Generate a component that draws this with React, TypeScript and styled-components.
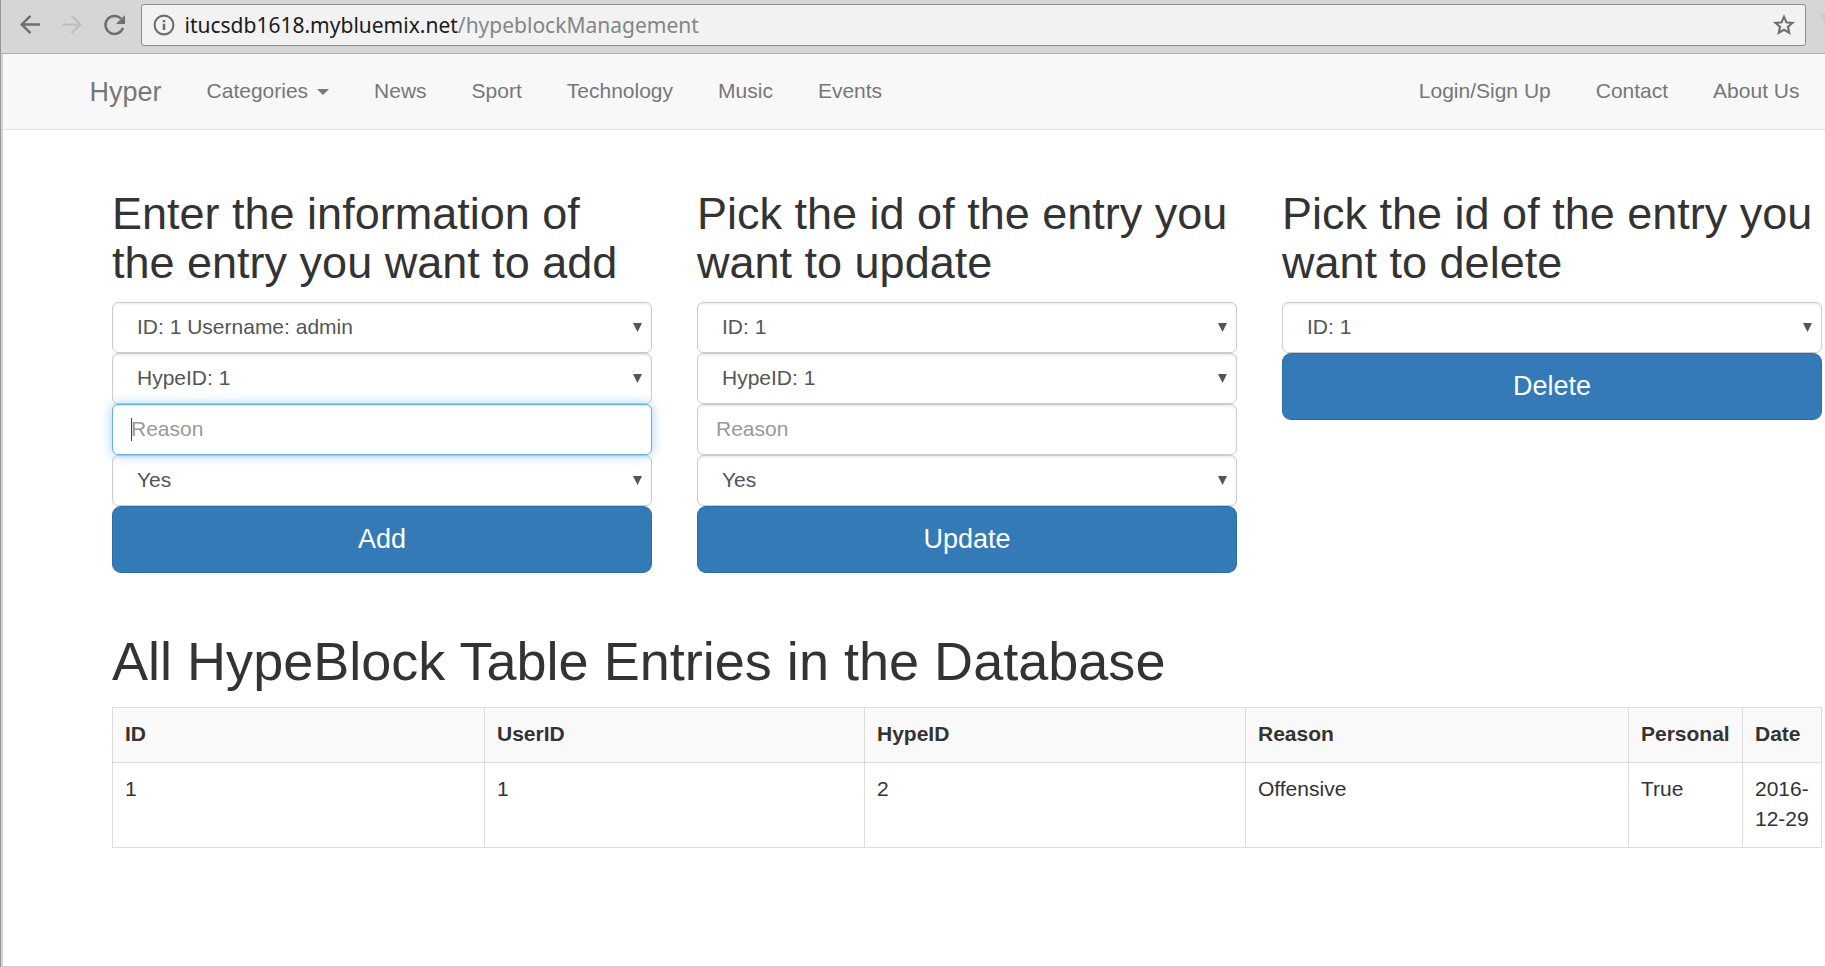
import React from "react";
import styled, { createGlobalStyle, css } from "styled-components";

const GlobalStyle = createGlobalStyle`
  * { box-sizing: border-box; }
  body {
    margin: 0;
    background: #fff;
    color: #333;
    font: 21px/30px "Liberation Sans", Arial, sans-serif;
    overflow: hidden;
  }
`;

const Window = styled.div`
  display: flex;
  flex-direction: column;
  width: 1825px;
  height: 967px;
  border-left: 1px solid #979797;
  overflow: hidden;
`;

const Toolbar = styled.header`
  display: flex;
  align-items: flex-start;
  flex: none;
  height: 54px;
  padding: 4px 0 0 16px;
  background: #d6d6d6;
  border-bottom: 1px solid #b0b0b0;
`;

const ToolIcon = styled.svg<{ $faded?: boolean }>`
  flex: none;
  width: 28px;
  height: 28px;
  margin: 7px 14px 0 0;
  color: ${(p) => (p.$faded ? "#bdbdbd" : "#6e6e6e")};
`;

const ExtensionIcon = styled.svg`
  flex: none;
  width: 12px;
  height: 14px;
  margin: 9px 0 0 16px;
  color: #c6c6c6;
`;

const AddressBar = styled.div`
  display: flex;
  flex: none;
  align-items: center;
  width: 1665px;
  height: 42px;
  margin-left: -2px;
  padding: 0 9.5px 0 10px;
  background: #f2f2f2;
  border: 1px solid #8c8c8c;
  border-radius: 3px;
`;

const BarIcon = styled.svg`
  flex: none;
  width: 24px;
  height: 24px;
  color: #6e6e6e;
`;

const Url = styled.div`
  flex: 1;
  margin-left: 8.5px;
  font: 21px/38px "Noto Sans", sans-serif;
  color: #1b1b1b;
  span { color: #858585; }
`;

const Page = styled.div`
  flex: 1;
  display: flex;
  flex-direction: column;
  border-left: 2px solid #d3d3d3;
  border-bottom: 1px solid #d0d0d0;
  background: #fff;
`;

const Navbar = styled.nav`
  display: flex;
  flex: none;
  height: 76px;
  padding: 0 25.5px 0 86.5px;
  background: #f8f8f8;
  border-bottom: 1px solid #e3e3e3;
  color: #777;
  line-height: 73px;
`;

const Brand = styled.div`
  font-size: 27px;
  line-height: 76px;
  margin-right: 45px;
`;

const NavGroup = styled.div<{ $end?: boolean }>`
  display: flex;
  align-items: flex-start;
  gap: 45px;
  ${(p) => p.$end && css`margin-left: auto;`}
`;

const NavItem = styled.div`
  display: flex;
  align-items: center;
  white-space: nowrap;
`;

const Caret = styled.i`
  margin: 3px 0 0 9px;
  border: 6px solid transparent;
  border-top-color: #777;
  border-bottom: 0;
`;

const Content = styled.main`
  width: 1710px;
  margin-left: 109px;
`;

const Forms = styled.section`
  display: grid;
  grid-template-columns: repeat(3, 540px);
  column-gap: 45px;
  height: 474px;
  padding-top: 59px;
  align-items: start;
`;

const Form = styled.div`
  display: flex;
  flex-direction: column;
`;

const FormTitle = styled.h2`
  margin: 0 0 15px;
  font-size: 45px;
  line-height: 49px;
  font-weight: 400;
  white-space: nowrap;
`;

const Control = styled.div<{ $focused?: boolean; $input?: boolean }>`
  position: relative;
  z-index: ${(p) => (p.$focused ? 1 : 0)};
  display: flex;
  justify-content: space-between;
  align-items: center;
  height: 51px;
  padding: 0 9px 2px ${(p) => (p.$input ? 18 : 24)}px;
  border: 1px solid ${(p) => (p.$focused ? "#66afe9" : "#ccc")};
  border-radius: 6px;
  background: #fff;
  color: ${(p) => (p.$input ? "#999" : "#555")};
  box-shadow: inset 0 1.5px 1.5px rgba(0, 0, 0, 0.075)
    ${(p) => p.$focused && ", 0 0 12px rgba(102, 175, 233, 0.6)"};
`;

const TextCursor = styled.i`
  position: absolute;
  left: 18px;
  top: 13px;
  width: 1px;
  height: 23px;
  background: #444;
`;

const Arrow = styled.svg`
  width: 9px;
  height: 9px;
  margin-top: 2px;
  fill: #555;
`;

const Submit = styled.button`
  height: 67px;
  padding: 0 0 1px;
  border: 1px solid #2e6da4;
  border-radius: 9px;
  background: #337ab7;
  color: #fff;
  font: 27px/36px "Liberation Sans", Arial, sans-serif;
`;

const Title = styled.h1`
  margin: 0 0 16px;
  font-size: 54px;
  line-height: 59px;
  font-weight: 400;
  letter-spacing: 0.02px;
  padding-top: 28px;
`;

const Table = styled.table`
  width: 1710px;
  table-layout: fixed;
  border-collapse: collapse;
  th, td {
    padding: 11px 12px 12px;
    border: 1px solid #ddd;
    text-align: left;
    vertical-align: top;
  }
  th { height: 55px; background: #f9f9f9; }
  td { height: 85px; }
`;

const columns = [
  { name: "ID", value: "1", width: 372 },
  { name: "UserID", value: "1", width: 380 },
  { name: "HypeID", value: "2", width: 381 },
  { name: "Reason", value: "Offensive", width: 383 },
  { name: "Personal", value: "True", width: 114 },
  { name: "Date", value: "2016-12-29", width: 79 },
];

const Select = ({ children }: { children: React.ReactNode }) => (
  <Control>
    <span>{children}</span>
    <Arrow viewBox="0 0 9 9"><path d="M0 0h9L4.5 9z" /></Arrow>
  </Control>
);

export default function App() {
  return (
    <>
      <GlobalStyle />
      <Window>
        <Toolbar>
          <ToolIcon viewBox="0 0 28 28" fill="none" stroke="currentColor" strokeWidth="2.4">
            <path d="M23 13.5H4.500M13.500 4.800l-8.800 8.700 8.800 8.700" />
          </ToolIcon>
          <ToolIcon $faded viewBox="0 0 28 28" fill="none" stroke="currentColor" strokeWidth="2.2">
            <path d="M3 13.5h18M12.500 4.800l8.800 8.700-8.800 8.700" />
          </ToolIcon>
          <ToolIcon viewBox="0 0 28 28" fill="none" stroke="currentColor" strokeWidth="2.500">
            <path d="M22 16.800A9 9 0 1 1 20 7.700" />
            <path d="M24 4v9h-9z" fill="currentColor" stroke="none" />
          </ToolIcon>
          <AddressBar>
            <BarIcon viewBox="0 0 24 24" fill="none" stroke="currentColor">
              <circle cx="12" cy="12" r="9.400" strokeWidth="2.100" />
              <path d="M12 10.700v6.300M12 7v2.200" strokeWidth="2.500" />
            </BarIcon>
            <Url>itucsdb1618.mybluemix.net<span>/hypeblockManagement</span></Url>
            <BarIcon viewBox="0 0 24 24" fill="currentColor" fillRule="evenodd">
              <path d="M23 9.100l-7.800-.7L12 1.200 8.800 8.400 1 9.100l5.900 5.200L5.200 22l6.800-4.100 6.800 4.100-1.700-7.700zM12 15.600l-3.700 2.200 1-4.200-3.300-2.900 4.300-.4L12 6.300l1.700 4 4.300.4-3.300 2.900 1 4.200z" />
            </BarIcon>
          </AddressBar>
          <ExtensionIcon viewBox="0 0 12 14" fill="currentColor">
            <path d="M0 1l12-1v14H4z" />
          </ExtensionIcon>
        </Toolbar>
        <Page>
          <Navbar>
            <Brand>Hyper</Brand>
            <NavGroup>
              <NavItem>Categories<Caret /></NavItem>
              {["News", "Sport", "Technology", "Music", "Events"].map((t) => <NavItem key={t}>{t}</NavItem>)}
            </NavGroup>
            <NavGroup $end>
              {["Login/Sign Up", "Contact", "About Us"].map((t) => <NavItem key={t}>{t}</NavItem>)}
            </NavGroup>
          </Navbar>
          <Content>
            <Forms>
              <Form>
                <FormTitle>Enter the information of<br />the entry you want to add</FormTitle>
                <Select>ID: 1 Username: admin</Select>
                <Select>HypeID: 1</Select>
                <Control $input $focused><TextCursor />Reason</Control>
                <Select>Yes</Select>
                <Submit>Add</Submit>
              </Form>
              <Form>
                <FormTitle>Pick the id of the entry you<br />want to update</FormTitle>
                <Select>ID: 1</Select>
                <Select>HypeID: 1</Select>
                <Control $input>Reason</Control>
                <Select>Yes</Select>
                <Submit>Update</Submit>
              </Form>
              <Form>
                <FormTitle>Pick the id of the entry you<br />want to delete</FormTitle>
                <Select>ID: 1</Select>
                <Submit>Delete</Submit>
              </Form>
            </Forms>
            <Title>All HypeBlock Table Entries in the Database</Title>
            <Table>
              <colgroup>
                {columns.map((c) => <col key={c.name} width={c.width} />)}
              </colgroup>
              <thead><tr>{columns.map((c) => <th key={c.name}>{c.name}</th>)}</tr></thead>
              <tbody><tr>{columns.map((c) => <td key={c.name}>{c.value}</td>)}</tr></tbody>
            </Table>
          </Content>
        </Page>
      </Window>
    </>
  );
}
